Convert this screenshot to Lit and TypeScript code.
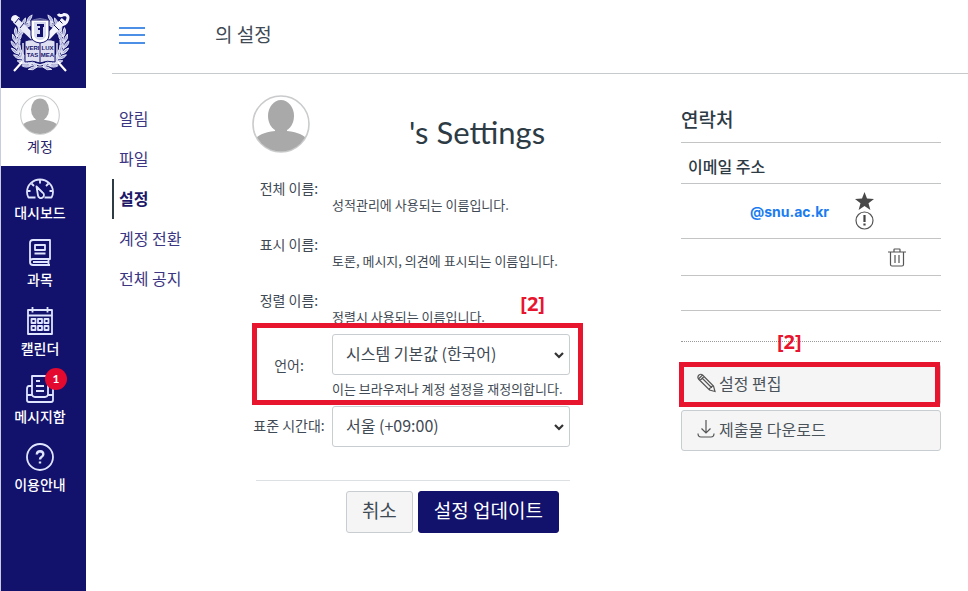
import { LitElement, html, css, svg } from "lit";
import { customElement } from "lit/decorators.js";
import { classMap } from "lit/directives/class-map.js";

const leaves = Array.from({ length: 22 }, (_, i) => {
  const side = i < 11 ? -1 : 1;
  const step = i % 11;
  const angle = 90 + side * (14 + step * 14);
  const rad = (angle * Math.PI) / 180;
  return {
    x: Math.round((30 + 24 * Math.cos(rad)) * 10) / 10,
    y: Math.round((31 + 24 * Math.sin(rad)) * 10) / 10,
    turn: angle + side * 90,
    side,
  };
});

const crest = html`<svg class="crest" viewBox="0 0 60 62" role="img" aria-label="SNU">
  <g fill="none" stroke="#e4e6f6" stroke-width="1">
    <circle cx="30" cy="31" r="24" stroke-width="1" />
    ${leaves.map(
      (l) => svg`<g transform="translate(${l.x} ${l.y}) rotate(${l.turn})">
        <path d="M-3 0Q0 -5 5 -4.500Q3 -1 -3 0ZM-3 0Q0 5 5 4.500Q3 1 -3 0Z" fill="#a9acd6" stroke-width=".9" />
      </g>`
    )}
  </g>
  <path d="M4 59L13 49M56 59L47 49" stroke="#fff" stroke-width="2.200" />
  <path d="M5 8L25 27" stroke="#e9ebf8" stroke-width="6" />
  <path d="M1 8Q1 3 6 3L10 6L5 11Z" fill="#f4f5fc" />
  <path d="M9 6L5 11M14 11L10 16" stroke="#14136c" stroke-width="1" />
  <path d="M54 8L35 28" stroke="#f4f5fc" stroke-width="6" />
  <path d="M49 8L54 13M44 13L49 18" stroke="#14136c" stroke-width="1" />
  <path d="M48 2Q50 5 54 2.500Q60 3 57 9Q56 13 50 13" fill="none" stroke="#f4f5fc" stroke-width="3" />
  <path d="M15 29Q23 26 30 30Q37 26 45 29V50Q37 48 30 51Q23 48 15 50Z" fill="#dfe1f2" stroke="#14136c" stroke-width="1" />
  <path d="M13 31V52Q23 50 30 53Q37 50 47 52V31" fill="none" stroke="#dfe1f4" stroke-width="1.500" />
  <path d="M30 30V51" stroke="#14136c" stroke-width="1" />
  <text x="22.500" y="38" class="motto">VERI</text>
  <text x="37.500" y="38" class="motto">LUX</text>
  <text x="22.500" y="45" class="motto">TAS</text>
  <text x="37.500" y="45" class="motto">MEA</text>
  <path d="M21 8H39V23Q39 30 30 31Q21 30 21 23Z" fill="#fff" stroke="#14136c" stroke-width="1" />
  <path d="M24 10H36V24Q34 28 30 28Q26 28 24 24Z" fill="#d9dbf0" />
  <path d="M27 12H34V15H33V25H27V22H30V18H28V16H30V14H27Z" fill="#14136c" />
</svg>`;

const person = html`<svg class="person" viewBox="0 0 58 58" aria-hidden="true">
  <defs><clipPath id="ring"><circle cx="29" cy="29" r="27.500" /></clipPath></defs>
  <circle cx="29" cy="29" r="28" fill="#fff" stroke="#c9cbcc" stroke-width="1.600" />
  <g clip-path="url(#ring)" fill="#a9a9a9">
    <ellipse cx="29" cy="21" rx="13" ry="16" />
    <path d="M23 30H35V36Q52 38 55 45V58H3V45Q6 38 23 36Z" />
  </g>
</svg>`;

const icons = {
  dashboard: html`<svg class="glyph" width="28" height="21" viewBox="0 0 28 21" aria-hidden="true">
    <path d="M9.500 19.500H2.500Q1 17 1 14A13 12.500 0 0 1 27 14Q27 17 25.500 19.500H18.500" />
    <path d="M14 2V5.500M5.500 5.500L8 8M22.500 5.500L20 8M1.500 13H4.500M23.500 13H26.500" />
    <path d="M10.500 8.500L16.500 14.500A3 3 0 1 1 12 17.500Z" />
  </svg>`,
  book: html`<svg class="glyph" width="22" height="27" viewBox="0 0 22 27" aria-hidden="true">
    <path d="M4 1H21V20H4Q1 20 1 23Q1 26 4 26H21M1 23V4Q1 1 4 1M19.500 20V26M4 23H19" />
    <path d="M6 6H16V11H6ZM5.500 14.500H16.500" />
  </svg>`,
  calendar: html`<svg class="glyph" width="26" height="29" viewBox="0 0 26 29" aria-hidden="true">
    <path d="M1 4H25V28H1ZM1 9.500H25M5.500 1V6.500M20.500 1V6.500" />
    <path d="M4.500 13H8.500V17H4.500ZM11 13H15V17H11ZM17.500 13H21.500V17H17.500ZM4.500 20H8.500V24H4.500ZM11 20H15V24H11ZM17.500 20H21.500V24H17.500Z" />
  </svg>`,
  inbox: html`<svg class="glyph" width="28" height="28" viewBox="0 0 28 28" aria-hidden="true">
    <path d="M6 20V1H22V20M6 11H3Q1 11 1 14V25Q1 27 3 27H25Q27 27 27 25V14Q27 11 25 11H22" />
    <path d="M1 20H6Q7 22 9 22H19Q21 22 22 20H27M10 6H14M10 11H18M10 16H18" />
  </svg>`,
  help: html`<svg class="glyph" width="28" height="28" viewBox="0 0 28 28" aria-hidden="true">
    <circle cx="14" cy="14" r="13" />
    <path class="heavy" d="M10.800 11.500Q11 8.300 14.200 8.300Q17.300 8.500 17.300 11.300Q17.300 13 15.500 14Q14 15 14 16.500M14 18.500V20.500" />
  </svg>`,
};

const navItems = [
  { label: "대시보드", icon: icons.dashboard, badge: 0 },
  { label: "과목", icon: icons.book, badge: 0 },
  { label: "캘린더", icon: icons.calendar, badge: 0 },
  { label: "메시지함", icon: icons.inbox, badge: 1 },
  { label: "이용안내", icon: icons.help, badge: 0 },
];

const sections = [
  { label: "알림", active: false },
  { label: "파일", active: false },
  { label: "설정", active: true },
  { label: "계정 전환", active: false },
  { label: "전체 공지", active: false },
];

const names = [
  { term: "전체 이름:", hint: "성적관리에 사용되는 이름입니다." },
  { term: "표시 이름:", hint: "토론, 메시지, 의견에 표시되는 이름입니다." },
  { term: "정렬 이름:", hint: "정렬시 사용되는 이름입니다." },
];

@customElement("global-nav")
export class GlobalNav extends LitElement {
  static styles = css`
    :host { display: block; background: #12116b; }
    a { text-decoration: none; color: #fff; }
    .logo { display: flex; justify-content: center; padding: 12px 7px 14px 0; }
    .crest { width: 60px; height: 62px; display: block; }
    .motto { font: 700 6px "Liberation Sans", sans-serif; fill: #14136c; text-anchor: middle; }
    .items { display: flex; flex-direction: column; gap: 17px; padding-right: 7px; }
    .item { display: flex; flex-direction: column; align-items: center; gap: 3px; font-size: 14px; line-height: 20px; font-weight: 500; }
    .account { background: #fff; color: #2a2468; gap: 1px; padding: 7px 7px 10px 0; margin-bottom: 12px; font-weight: 400; }
    .person { width: 40px; height: 40px; display: block; }
    .holder { position: relative; display: flex; }
    .glyph { display: block; fill: none; stroke: #dfe5ff; stroke-width: 1.8; stroke-linejoin: round; }
    .heavy { stroke-width: 2.4; }
    .badge { position: absolute; top: -7px; right: -13px; width: 22px; height: 22px; border-radius: 50%; background: #e4092f; font: 700 12px/22px Lato, sans-serif; text-align: center; }
  `;

  render() {
    return html`<nav>
      <a class="logo" href="#">${crest}</a>
      <a class="item account" href="#">${person}<span>계정</span></a>
      <div class="items">
        ${navItems.map(
          (n) => html`<a class="item" href="#">
            <span class="holder">${n.icon}${n.badge ? html`<span class="badge">${n.badge}</span>` : ""}</span>
            <span>${n.label}</span>
          </a>`
        )}
      </div>
    </nav>`;
  }
}

@customElement("settings-form")
export class SettingsForm extends LitElement {
  static styles = css`
    :host { display: block; color: #3f4a54; }
    .head { display: flex; align-items: flex-end; gap: 99px; height: 58px; margin-bottom: 26px; }
    .person { width: 58px; height: 58px; flex: none; display: block; }
    .title { margin: 0; font: 400 31px/42px Lato, sans-serif; color: #2d3b45; white-space: nowrap; }
    .names { margin: 0; display: grid; gap: 20px; }
    .row { display: grid; grid-template-columns: 74px minmax(0, 238px); column-gap: 6px; position: relative; font-size: 14px; line-height: 20px; }
    .name { height: 36px; }
    .term { text-align: center; white-space: nowrap; padding-bottom: 3px; }
    .hint { margin: 0; font-size: 13px; line-height: 20px; white-space: nowrap; }
    .name .hint { align-self: end; }
    .name .term { line-height: 18px; }
    .language { margin: 7px 0; align-items: center; }
    .zone { align-items: center; }
    .control { position: relative; }
    .language .control { margin-bottom: 4px; }
    .select { appearance: none; display: block; width: 100%; height: 41px; padding: 0 30px 4px 13px; border: 1px solid #c7cdd1; border-radius: 3px; background: #fff; color: #3f4a54; font: inherit; font-size: 16px; }
    .chevron { position: absolute; right: 5px; top: 17px; fill: none; stroke: #333; stroke-width: 2.2; }
    .frame { position: absolute; inset: -11px 0 -6px 0; border: 5px solid #e8152f; pointer-events: none; }
    .mark { position: absolute; right: 38px; top: -44px; font: 700 20px/28px "Noto Sans", sans-serif; color: #e8152f; }
    .actions { display: flex; justify-content: flex-end; gap: 5px; margin: 33px 13px 0 4px; padding: 10px 11px 0 0; border-top: 1px solid #dde0e2; }
    .button { height: 42px; padding: 0 15px 4px; border: 1px solid #c7cdd1; border-radius: 3px; background: #f5f5f5; color: #3f4a54; font: inherit; font-size: 19px; line-height: 28px; white-space: nowrap; }
    .primary { background: #12116b; border-color: #12116b; color: #fff; }
  `;

  chevron() {
    return html`<svg class="chevron" width="12" height="9" viewBox="0 0 12 9" aria-hidden="true"><path d="M2 2L6 6L10 2" /></svg>`;
  }

  render() {
    return html`<form>
      <div class="head">${person}<h1 class="title">'s Settings</h1></div>
      <div class="names">
        ${names.map(
          (n) => html`<div class="row name"><span class="term">${n.term}</span><p class="hint">${n.hint}</p></div>`
        )}
      </div>
      <div class="row language">
        <label class="term" for="language">언어:</label>
        <div>
          <div class="control">
            <select class="select" id="language"><option>시스템 기본값 (한국어)</option></select>
            ${this.chevron()}
          </div>
          <p class="hint">이는 브라우저나 계정 설정을 재정의합니다.</p>
        </div>
        <span class="frame"></span>
        <span class="mark">[2]</span>
      </div>
      <div class="row zone">
        <label class="term" for="zone">표준 시간대:</label>
        <div class="control">
          <select class="select" id="zone"><option>서울 (+09:00)</option></select>
          ${this.chevron()}
        </div>
      </div>
      <div class="actions">
        <button class="button" type="button">취소</button>
        <button class="button primary" type="button">설정 업데이트</button>
      </div>
    </form>`;
  }
}

@customElement("contact-panel")
export class ContactPanel extends LitElement {
  static styles = css`
    :host { display: block; color: #3f4a54; }
    .title { margin: 0; height: 47px; border-bottom: 1px solid #c2c4c6; font-size: 19px; line-height: 48px; font-weight: 500; color: #2d3b45; }
    .contacts { width: 100%; border-collapse: separate; border-spacing: 0; table-layout: fixed; }
    .contacts th, .contacts td { padding: 0; border-bottom: 1px solid #c2c4c6; box-sizing: border-box; text-align: right; vertical-align: middle; }
    .contacts th { height: 41px; padding: 6px 0 0 7px; text-align: left; font-size: 16px; line-height: 24px; font-weight: 500; color: #2d3b45; }
    .mail-col { width: 148px; }
    .flag-col { width: 45px; }
    .trash-col { width: 32px; }
    .contacts .mail { height: 55px; padding-bottom: 3px; }
    .bin { height: 37px; }
    .blank { height: 35px; }
    .address { color: #1a7cf0; text-decoration: none; font: 700 14px/20px Inter, sans-serif; }
    .icon { display: block; margin-left: auto; }
    .icon-button { display: block; margin-left: auto; padding: 0; border: 0; background: none; }
    .divider { position: relative; height: 30px; border-bottom: 1px dotted #999; margin-bottom: 22px; }
    .mark { position: absolute; left: 96px; bottom: -15px; font: 700 20px/28px "Noto Sans", sans-serif; color: #e8152f; }
    .actions { display: grid; gap: 5px; }
    .edit { position: relative; }
    .frame { position: absolute; inset: -2px 1px -2px -2px; border: 5px solid #e8152f; pointer-events: none; }
    .button { display: flex; align-items: center; gap: 3px; width: 100%; height: 41px; padding: 0 15px 3px; border: 1px solid #c7cdd1; border-radius: 3px; background: #f5f5f5; color: #4a525a; font: inherit; font-size: 16px; }
    .line { fill: none; stroke: #555; stroke-width: 1.2; }
  `;

  render() {
    return html`<aside>
      <h2 class="title">연락처</h2>
      <table class="contacts">
        <colgroup><col class="mail-col" /><col class="flag-col" /><col class="trash-col" /><col /></colgroup>
        <thead><tr><th colspan="4">이메일 주소</th></tr></thead>
        <tbody>
          <tr>
            <td class="mail"><a class="address" href="#">@snu.ac.kr</a></td>
            <td>
              <svg class="icon" width="19" height="18" viewBox="0 0 19 18" aria-hidden="true"><path fill="#484848" d="M9.500 0L12 6.600L19 6.900L13.500 11.200L15.400 18L9.500 14.100L3.600 18L5.500 11.200L0 6.900L7 6.600Z" /></svg>
              <svg class="icon" width="19" height="20" viewBox="0 0 19 20" aria-hidden="true"><circle class="line" cx="9.500" cy="10.500" r="8.500" /><path d="M9.500 5V12M9.500 13.500V15.500" stroke="#444" stroke-width="2.200" /></svg>
            </td>
            <td></td><td></td>
          </tr>
          <tr>
            <td class="bin"></td><td></td>
            <td><button class="icon-button" type="button" aria-label="삭제"><svg class="icon" width="18" height="19" viewBox="0 0 18 19" aria-hidden="true"><path class="line" d="M0 4H18M6 4V1.500Q6 1 6.500 1H11.500Q12 1 12 1.500V4M2.500 4V16.500Q2.500 18 4 18H14Q15.500 18 15.500 16.500V4M7 7V15M11 7V15" /></svg></button></td>
            <td></td>
          </tr>
          <tr><td class="blank" colspan="4"></td></tr>
        </tbody>
      </table>
      <div class="divider"><span class="mark">[2]</span></div>
      <div class="actions">
        <div class="edit">
          <button class="button" type="button">
            <svg width="19" height="20" viewBox="0 0 19 20" aria-hidden="true"><path class="line" d="M1.500 6L5.500 2Q4 .5 2 2Q0 4 1.500 6L12.500 17L18 18.500L16.500 13L5.500 2M3 7.500L7 3.500M5.500 5.500L14.500 14.500M12.500 17Q12 15 14.500 14.500Q14.500 12.800 16.500 13" /></svg>
            설정 편집
          </button>
          <span class="frame"></span>
        </div>
        <button class="button" type="button">
          <svg width="19" height="20" viewBox="0 0 19 20" aria-hidden="true"><path class="line" d="M9 1V14M4.500 9.500L9 14L13.500 9.500M1 14.500Q1 18 4 18H14Q17 18 17 14.500" /></svg>
          제출물 다운로드
        </button>
      </div>
    </aside>`;
  }
}

@customElement("app-root")
export class AppRoot extends LitElement {
  static styles = css`
    :host { display: grid; grid-template-columns: 85px minmax(0, 1fr); min-height: 100vh; box-sizing: border-box; border-left: 1px solid #c9cbe0; background: #fff; font-family: "Noto Sans CJK KR", "Noto Sans", sans-serif; color: #3f4a54; }
    .page { padding-left: 26px; }
    .top { display: flex; align-items: center; height: 74px; box-sizing: border-box; padding: 0 0 4px 7px; gap: 70px; border-bottom: 1px solid #c7cacc; margin-bottom: 21px; }
    .menu { padding: 0; border: 0; background: none; display: block; }
    .menu-icon { display: block; stroke: #4b8fe6; stroke-width: 2; }
    .crumb { font-size: 19px; line-height: 28px; padding-bottom: 2px; }
    .columns { display: grid; grid-template-columns: 140px minmax(0, 1fr) 260px; padding-right: 27px; }
    .sections { padding-top: 4px; }
    .section { display: block; box-sizing: border-box; height: 40px; padding-left: 5px; border-left: 2px solid transparent; font-size: 16px; line-height: 38px; color: #3b3582; text-decoration: none; }
    .active { border-color: #2d3b45; font-weight: 700; color: #1c1768; }
    .form { max-width: 331px; }
  `;

  render() {
    return html`
      <global-nav></global-nav>
      <div class="page">
        <header class="top">
          <button class="menu" type="button" aria-label="메뉴">
            <svg class="menu-icon" width="26" height="18" viewBox="0 0 26 18" aria-hidden="true"><path d="M0 2H26M0 9H26M0 17H26" /></svg>
          </button>
          <span class="crumb">의 설정</span>
        </header>
        <main class="columns">
          <nav class="sections">
            ${sections.map(
              (s) => html`<a href="#" class=${classMap({ section: true, active: s.active })}>${s.label}</a>`
            )}
          </nav>
          <settings-form class="form"></settings-form>
          <contact-panel></contact-panel>
        </main>
      </div>
    `;
  }
}
